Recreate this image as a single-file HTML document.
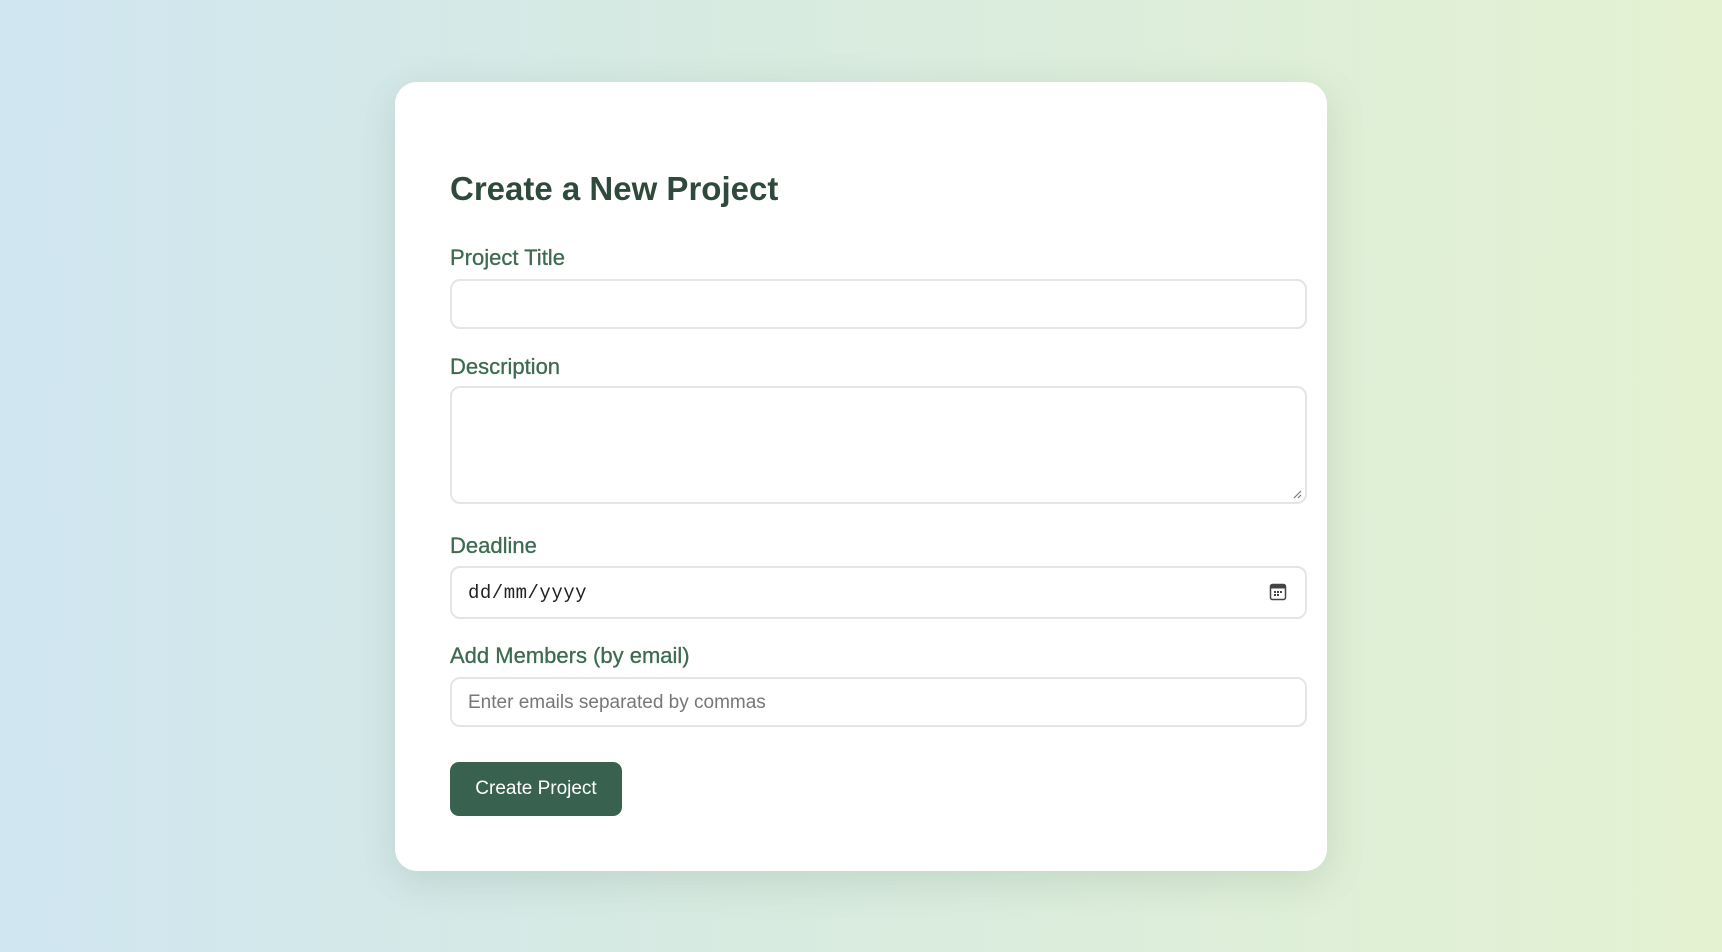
<!DOCTYPE html>
<html><head><meta charset="utf-8"><style>
*{box-sizing:border-box;margin:0;padding:0}
html,body{width:1722px;height:952px;overflow:hidden}
body{background:linear-gradient(90deg,#d0e6f1 0%,#d8ebe0 45%,#e4f2d2 100%);font-family:"Liberation Sans",sans-serif;position:relative}
.card{position:absolute;left:395px;top:82px;width:932px;height:789px;background:#fff;border-radius:22px;box-shadow:0 10px 40px rgba(60,90,70,0.15)}
.a{position:absolute}
h1{position:absolute;left:450px;top:167px;font-size:33px;font-weight:bold;color:#2f4a3c;line-height:44px}
.lbl{position:absolute;left:450px;font-size:22px;color:#3d6b50;line-height:26px;-webkit-text-stroke:0.3px #3d6b50}
.in{position:absolute;left:450px;width:857px;border:2px solid #e5e5e5;border-radius:10px;background:#fff}
.btn{position:absolute;left:450px;top:762px;width:172px;height:54px;background:#386150;color:#fff;border-radius:9px;font-size:19px;text-align:center;line-height:54px}
</style></head><body>
<div class="card"></div>
<h1>Create a New Project</h1>
<div class="lbl" style="top:245px">Project Title</div>
<div class="in" style="top:279px;height:50px"></div>
<div class="lbl" style="top:354px">Description</div>
<div class="in" style="top:386px;height:118px">
<svg class="a" style="right:2px;bottom:2px" width="12" height="12"><path d="M3 10L10 3M7 10L10 7" stroke="#777" stroke-width="1.2"/></svg>
</div>
<div class="lbl" style="top:533px">Deadline</div>
<div class="in" style="top:566px;height:53px">
<span class="a" style="left:16px;top:14px;font-family:'Liberation Mono',monospace;font-size:19px;color:#222;letter-spacing:0.5px">dd/mm/yyyy</span>
<svg class="a" style="left:817px;top:15px" width="18" height="18" viewBox="0 0 18 18"><rect x="1.5" y="1.5" width="15" height="15" rx="2" fill="none" stroke="#444" stroke-width="1.5"/><rect x="1.5" y="1.5" width="15" height="4" fill="#444"/><g fill="#444"><rect x="5" y="8" width="2" height="2"/><rect x="8" y="8" width="2" height="2"/><rect x="11" y="8" width="2" height="2"/><rect x="5" y="11" width="2" height="2"/><rect x="8" y="11" width="2" height="2"/></g></svg>
</div>
<div class="lbl" style="top:643px">Add Members (by email)</div>
<div class="in" style="top:677px;height:50px">
<span class="a" style="left:16px;top:13px;font-size:19px;color:#777">Enter emails separated by commas</span>
</div>
<div class="btn">Create Project</div>
</body></html>
